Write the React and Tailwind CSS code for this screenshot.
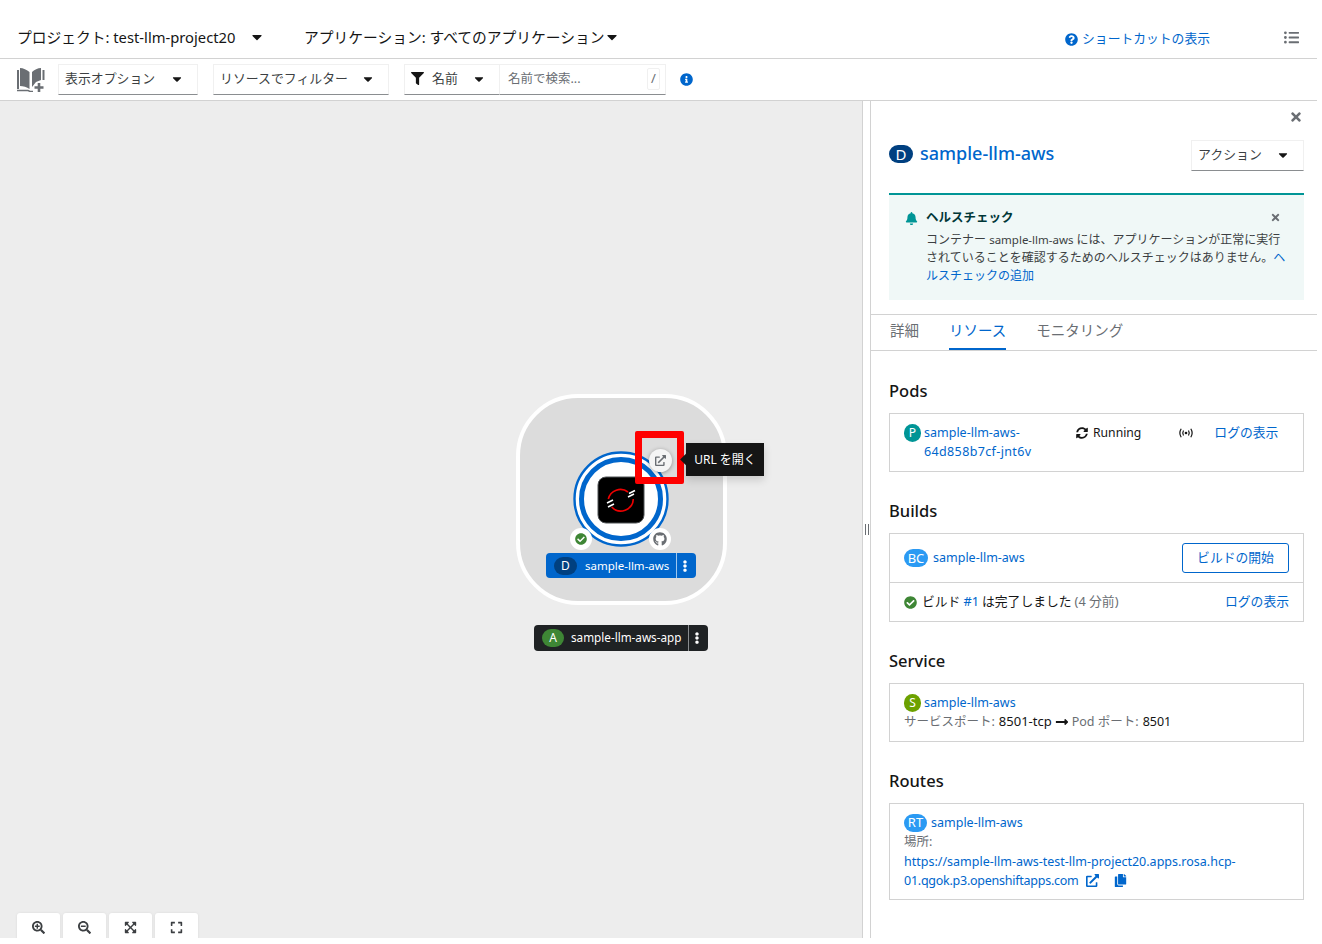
import React from 'react';
import {
  FaBell, FaTimes, FaSyncAlt, FaCheckCircle, FaExternalLinkAlt, FaCopy, FaGithub, FaFilter,
  FaInfoCircle, FaQuestionCircle, FaSearchPlus, FaSearchMinus, FaExpandArrowsAlt, FaExpand,
  FaEllipsisV, FaLongArrowAltRight, FaCaretDown, FaListUl,
} from 'react-icons/fa';

const font = 'font-["Noto_Sans","Noto_Sans_CJK_JP",sans-serif]';

function Badge({ children, className }) {
  return (
    <span className={`inline-flex h-[18px] shrink-0 items-center justify-center rounded-full text-[13px] leading-none text-white ${className}`}>
      {children}
    </span>
  );
}

function Select({ label, className, caretGap }) {
  return (
    <div className={`flex h-[31px] items-center border border-[#f0f0f0] border-b-[#8a8d90] pb-[2px] pl-[6px] text-[12.9px] text-[#3c3f42] ${className}`}>
      <span>{label}</span>
      <FaCaretDown className={`text-[14px] text-[#151515] ${caretGap}`} />
    </div>
  );
}

function Heading({ children, className }) {
  return <h2 className={`text-[16.5px] font-medium leading-[22px] text-[#151515] ${className}`}>{children}</h2>;
}

function Card({ children, className }) {
  return <div className={`border border-[#d2d2d2] ${className}`}>{children}</div>;
}

function BookIcon() {
  return (
    <svg width="28" height="25" viewBox="0 0 28 25" className="shrink-0">
      <path d="M0 3 H2 V22 H0 Z" fill="#6a6e73" />
      <path d="M3 1 C6 1 10 3 12.5 5 V22 C10 20 6 19 3 19 Z" fill="#6a6e73" />
      <path d="M15 5 C17 3 21 1 24 1 V13 L19 15 L15 20 Z" fill="#6a6e73" />
      <path d="M25.5 3 H27.5 V13 H25.5 Z" fill="#6a6e73" />
      <path d="M0 23.5 H11 L13 24.5 H16" fill="none" stroke="#6a6e73" strokeWidth="1.4" />
      <path d="M22 16 V25 M17.5 20.5 H26.5" stroke="#6a6e73" strokeWidth="2.6" />
    </svg>
  );
}

function BroadcastIcon() {
  return (
    <svg width="14" height="10" viewBox="0 0 14 10" fill="none" stroke="#151515" strokeWidth="1.2" className="shrink-0">
      <circle cx="7" cy="5" r="1.3" fill="#151515" stroke="none" />
      <path d="M4.5 2.5 C3.6 4 3.6 6 4.5 7.5 M9.5 2.5 C10.4 4 10.4 6 9.5 7.5" />
      <path d="M2.2 .8 C.6 3.3 .6 6.7 2.2 9.2 M11.8 .8 C13.4 3.3 13.4 6.7 11.8 9.2" />
    </svg>
  );
}

function NodeGraphic() {
  return (
    <svg width="96" height="96" viewBox="0 0 96 96" className="absolute left-[573px] top-[451px]">
      <circle cx="48" cy="48" r="46.5" fill="#fff" stroke="#0066cc" strokeWidth="2.4" />
      <circle cx="48" cy="48" r="39.5" fill="#fff" stroke="#0066cc" strokeWidth="5" />
      <rect x="25" y="26" width="46" height="46" rx="8" fill="#000" stroke="#4f5255" strokeWidth="1" />
      <path d="M35.3 48 A12.5 12.5 0 0 1 55 41" fill="none" stroke="#e00" strokeWidth="1.6" />
      <path d="M60.3 48 A12.5 12.5 0 0 1 38.7 56" fill="none" stroke="#e00" strokeWidth="1.6" />
      <path d="M56 42.5 L62 39.5 M55 46 L61 43 M34 52 L40 49 M35 56 L41 53" stroke="#fff" strokeWidth="1.6" />
    </svg>
  );
}

function Topology() {
  return (
    <div className="relative h-full w-[862px] shrink-0 bg-[#ededed]">
      <div className="absolute left-[516px] top-[293px] h-[211px] w-[211px] rounded-[62px] border-[4px] border-white bg-[#dcdcdc]" />
      <div className="absolute -top-[101px] left-0 h-[944px] w-[862px]">
        <NodeGraphic />
        <span className="absolute left-[570px] top-[528px] flex h-[22px] w-[22px] items-center justify-center rounded-full bg-white">
          <FaCheckCircle className="text-[12px] text-[#3e8635]" />
        </span>
        <span className="absolute left-[649px] top-[528px] flex h-[22px] w-[22px] items-center justify-center rounded-full bg-white">
          <FaGithub className="text-[14px] text-[#6a6e73]" />
        </span>
        <div className="absolute left-[546px] top-[553px] flex h-[25px] w-[150px] items-center rounded-[4px] bg-[#0066cc] text-[11.5px] text-white">
          <span className="ml-[8px] flex h-[18px] w-[23px] items-center justify-center rounded-full bg-[#004080] text-[12px]">D</span>
          <span className="ml-[8px] w-[91px] whitespace-nowrap">sample-llm-aws</span>
          <span className="flex h-full flex-1 items-center justify-center border-l border-[#9ec7ef] pr-[3px]"><FaEllipsisV className="text-[12px]" /></span>
        </div>
        <div className="absolute left-[534px] top-[625px] flex h-[26px] w-[174px] items-center rounded-[4px] bg-[#1f2224] text-[11.7px] text-white">
          <span className="ml-[8px] flex h-[18px] w-[22px] items-center justify-center rounded-full bg-[#3e8635] text-[12px]">A</span>
          <span className="ml-[7px] w-[117px] whitespace-nowrap">sample-llm-aws-app</span>
          <span className="flex h-full flex-1 items-center justify-center border-l border-[#8a8d90] pr-[3px]"><FaEllipsisV className="text-[12px]" /></span>
        </div>
        <span className="absolute left-[649px] top-[449px] flex h-[23px] w-[23px] items-center justify-center rounded-full bg-[#f5f5f5] shadow-[0_1px_4px_rgba(0,0,0,0.35)]">
          <FaExternalLinkAlt className="text-[11px] text-[#6a6e73]" />
        </span>
        <div className="absolute left-[635px] top-[431px] h-[53px] w-[49px] rounded-[2px] border-[7px] border-[#ff0000]" />
        <div className="absolute left-[686px] top-[443px] flex h-[33px] w-[78px] items-center justify-center bg-[#151515] text-[12px] text-white shadow-[0_4px_8px_rgba(0,0,0,0.15)]">
          <span className="absolute -left-[4px] top-[12px] h-[9px] w-[9px] rotate-45 bg-[#151515]" />
          <span className="relative">URL を開く</span>
        </div>
      </div>
      <div className="absolute left-[17px] top-[812px] flex gap-[3px]">
        {[FaSearchPlus, FaSearchMinus, FaExpandArrowsAlt, FaExpand].map((I, i) => (
          <button key={i} className="flex h-[36px] w-[43px] items-start justify-center rounded-[3px] bg-white pt-[8px] text-[#3c3f42] shadow-[0_0_3px_rgba(0,0,0,0.08)]">
            <I className="text-[13px]" />
          </button>
        ))}
      </div>
    </div>
  );
}

function Panel() {
  return (
    <div className="relative h-full w-[447px] overflow-hidden border-l border-[#d2d2d2] bg-white text-[12.5px] text-[#151515]">
      <FaTimes className="absolute right-[14px] top-[9px] text-[14px] text-[#6a6e73]" />
      <div className="flex h-[92px] items-start justify-between pl-[18px] pr-[13px] pt-[39px]">
        <div className="flex items-center gap-[7px]">
          <Badge className="mt-[2px] w-[24px] bg-[#004080] !text-[15px]">D</Badge>
          <span className="text-[18px] font-medium leading-[26px] text-[#0066cc]">sample-llm-aws</span>
        </div>
        <Select label="アクション" className="w-[113px]" caretGap="ml-[14px]" />
      </div>
      <div className="mx-[18px] h-[107px] w-[415px] border-t-2 border-[#009596] bg-[#f0f8f7] pl-[16px] pr-[16px] pt-[14px]">
        <div className="flex items-center">
          <FaBell className="text-[13px] text-[#009596]" />
          <span className="ml-[8px] flex-1 text-[12.5px] font-bold leading-[18px] text-[#003737]">ヘルスチェック</span>
          <FaTimes className="-mt-[1px] mr-[7px] text-[11px] text-[#6a6e73]" />
        </div>
        <p className="ml-[21px] mt-[4px] w-[363px] text-[12px] leading-[18px] text-[#3c3f42]">
          コンテナー <span className="text-[11.5px]">sample-llm-aws</span> には、アプリケーションが正常に実行されていることを確認するためのヘルスチェックはありません。<span className="text-[#0066cc]">ヘルスチェックの追加</span>
        </p>
      </div>
      <div className="mt-[14px] flex h-[37px] items-start gap-[30px] border-y border-[#d2d2d2] pl-[19px] text-[14.5px] leading-[31px] text-[#6a6e73]">
        <span>詳細</span>
        <span className="h-[35px] border-b-2 border-[#0066cc] text-[#0066cc]">リソース</span>
        <span>モニタリング</span>
      </div>
      <div className="pl-[18px] pr-[13px] pt-[29px]">
        <Heading>Pods</Heading>
        <Card className="mt-[11px] flex h-[59px] items-start pl-[14px] pt-[9px] leading-[19px]">
          <Badge className="mt-[1px] w-[17px] bg-[#009596] !text-[12px]">P</Badge>
          <span className="ml-[3px] w-[152px] text-[#0066cc]">sample-llm-aws-<br /><span className="tracking-[0.37px]">64d858b7cf-jnt6v</span></span>
          <span className="flex items-center gap-[5px] text-[12.2px]"><FaSyncAlt className="text-[12px]" />Running</span>
          <span className="ml-[38px] mt-[5px]"><BroadcastIcon /></span>
          <span className="ml-[21px] text-[12.8px] text-[#0066cc]">ログの表示</span>
        </Card>
        <Heading className="mt-[28px]">Builds</Heading>
        <Card className="mt-[11px] h-[89px]">
          <div className="flex h-[49px] items-center justify-between border-b border-[#d2d2d2] px-[14px]">
            <span className="flex items-center gap-[5px]">
              <Badge className="w-[24px] bg-[#2b9af3]">BC</Badge>
              <span className="text-[#0066cc]">sample-llm-aws</span>
            </span>
            <span className="flex h-[30px] w-[107px] items-center justify-center rounded-[3px] border border-[#0066cc] text-[12.8px] text-[#0066cc]">ビルドの開始</span>
          </div>
          <div className="flex h-[38px] items-center justify-between px-[14px]">
            <span className="flex items-center text-[12.8px]">
              <FaCheckCircle className="mr-[5px] text-[13px] text-[#3e8635]" />
              ビルド <span className="ml-[3px] mr-[3px] text-[#0066cc]">#1</span>は完了しました<span className="ml-[3px] text-[#6a6e73]">(4 分前)</span>
            </span>
            <span className="text-[12.8px] text-[#0066cc]">ログの表示</span>
          </div>
        </Card>
        <Heading className="mt-[28px]">Service</Heading>
        <Card className="mt-[11px] h-[59px] pl-[14px] pt-[9px] leading-[19px]">
          <div className="flex items-center gap-[3px]">
            <Badge className="w-[17px] bg-[#6ca100] !text-[12px]">S</Badge>
            <span className="text-[#0066cc]">sample-llm-aws</span>
          </div>
          <div className="flex items-center whitespace-nowrap">
            <span className="text-[#6a6e73]">サービスポート:</span>
            <span className="ml-[4px] text-[13px]">8501-tcp</span>
            <FaLongArrowAltRight className="ml-[3px] text-[14px]" />
            <span className="ml-[3px] text-[#6a6e73]">Pod ポート:</span>
            <span className="ml-[4px] text-[12.5px]">8501</span>
          </div>
        </Card>
        <Heading className="mt-[28px]">Routes</Heading>
        <Card className="mt-[11px] h-[97px] pl-[14px] pt-[9px] leading-[19.3px]">
          <div className="flex items-center gap-[4px]">
            <Badge className="w-[23px] bg-[#2b9af3]">RT</Badge>
            <span className="text-[#0066cc]">sample-llm-aws</span>
          </div>
          <div className="text-[#6a6e73]">場所:</div>
          <div className="whitespace-nowrap text-[#0066cc]">https://sample-llm-aws-test-llm-project20.apps.rosa.hcp-</div>
          <div className="flex items-center whitespace-nowrap text-[#0066cc]">
            <span className="tracking-[-0.25px]">01.qgok.p3.openshiftapps.com</span>
            <FaExternalLinkAlt className="ml-[7px] text-[13px]" />
            <FaCopy className="ml-[15px] text-[13px]" />
          </div>
        </Card>
      </div>
    </div>
  );
}

export default function App() {
  return (
    <div className={`h-[944px] w-[1322px] overflow-hidden bg-white ${font}`}>
      <div className="flex h-[938px] w-[1317px] flex-col overflow-hidden">
        <header className="flex h-[59px] shrink-0 items-center border-b border-[#d2d2d2] pl-[17px] pt-[16px] text-[14.75px] text-[#151515]">
          <span className="w-[232px] whitespace-nowrap">プロジェクト: test-llm-project20</span>
          <FaCaretDown className="text-[16px]" />
          <span className="ml-[39px] whitespace-nowrap">アプリケーション: すべてのアプリケーション</span>
          <FaCaretDown className="-ml-[1px] text-[16px]" />
          <span className="ml-auto mt-[4px] flex items-center gap-[4px] text-[12.8px] text-[#0066cc]">
            <FaQuestionCircle className="text-[13px]" />ショートカットの表示
          </span>
          <FaListUl className="ml-[74px] mr-[18px] text-[15px] text-[#6a6e73]" />
        </header>
        <div className="flex h-[42px] shrink-0 items-center border-b border-[#d2d2d2] pl-[17px]">
          <BookIcon />
          <Select label="表示オプション" className="ml-[13px] w-[140px]" caretGap="ml-[15px]" />
          <Select label="リソースでフィルター" className="ml-[15px] w-[176px]" caretGap="ml-[13px]" />
          <div className="ml-[15px] flex h-[31px] w-[96px] items-center border border-[#f0f0f0] border-b-[#8a8d90] pb-[2px] pl-[6px] text-[12.9px] text-[#3c3f42]">
            <FaFilter className="text-[13px] text-[#151515]" />
            <span className="ml-[8px]">名前</span>
            <FaCaretDown className="ml-[14px] text-[14px] text-[#151515]" />
          </div>
          <div className="flex h-[31px] w-[166px] items-center justify-between border border-l-0 border-[#f0f0f0] border-b-[#8a8d90] pb-[1px] pl-[8px] pr-[5px] text-[12.5px] text-[#6a6e73]">
            <span>名前で検索...</span>
            <span className="flex h-[22px] w-[13px] items-center justify-center rounded-[2px] border border-[#f0f0f0] text-[13px]">/</span>
          </div>
          <FaInfoCircle className="ml-[14px] text-[13px] text-[#0066cc]" />
        </div>
        <main className="flex min-h-0 flex-1">
          <Topology />
          <div className="relative w-[8px] shrink-0 border-l border-[#d2d2d2] bg-white">
            <span className="absolute left-[2px] top-[423px] h-[11px] w-[4px] border-x border-[#6a6e73]" />
          </div>
          <Panel />
        </main>
      </div>
    </div>
  );
}
